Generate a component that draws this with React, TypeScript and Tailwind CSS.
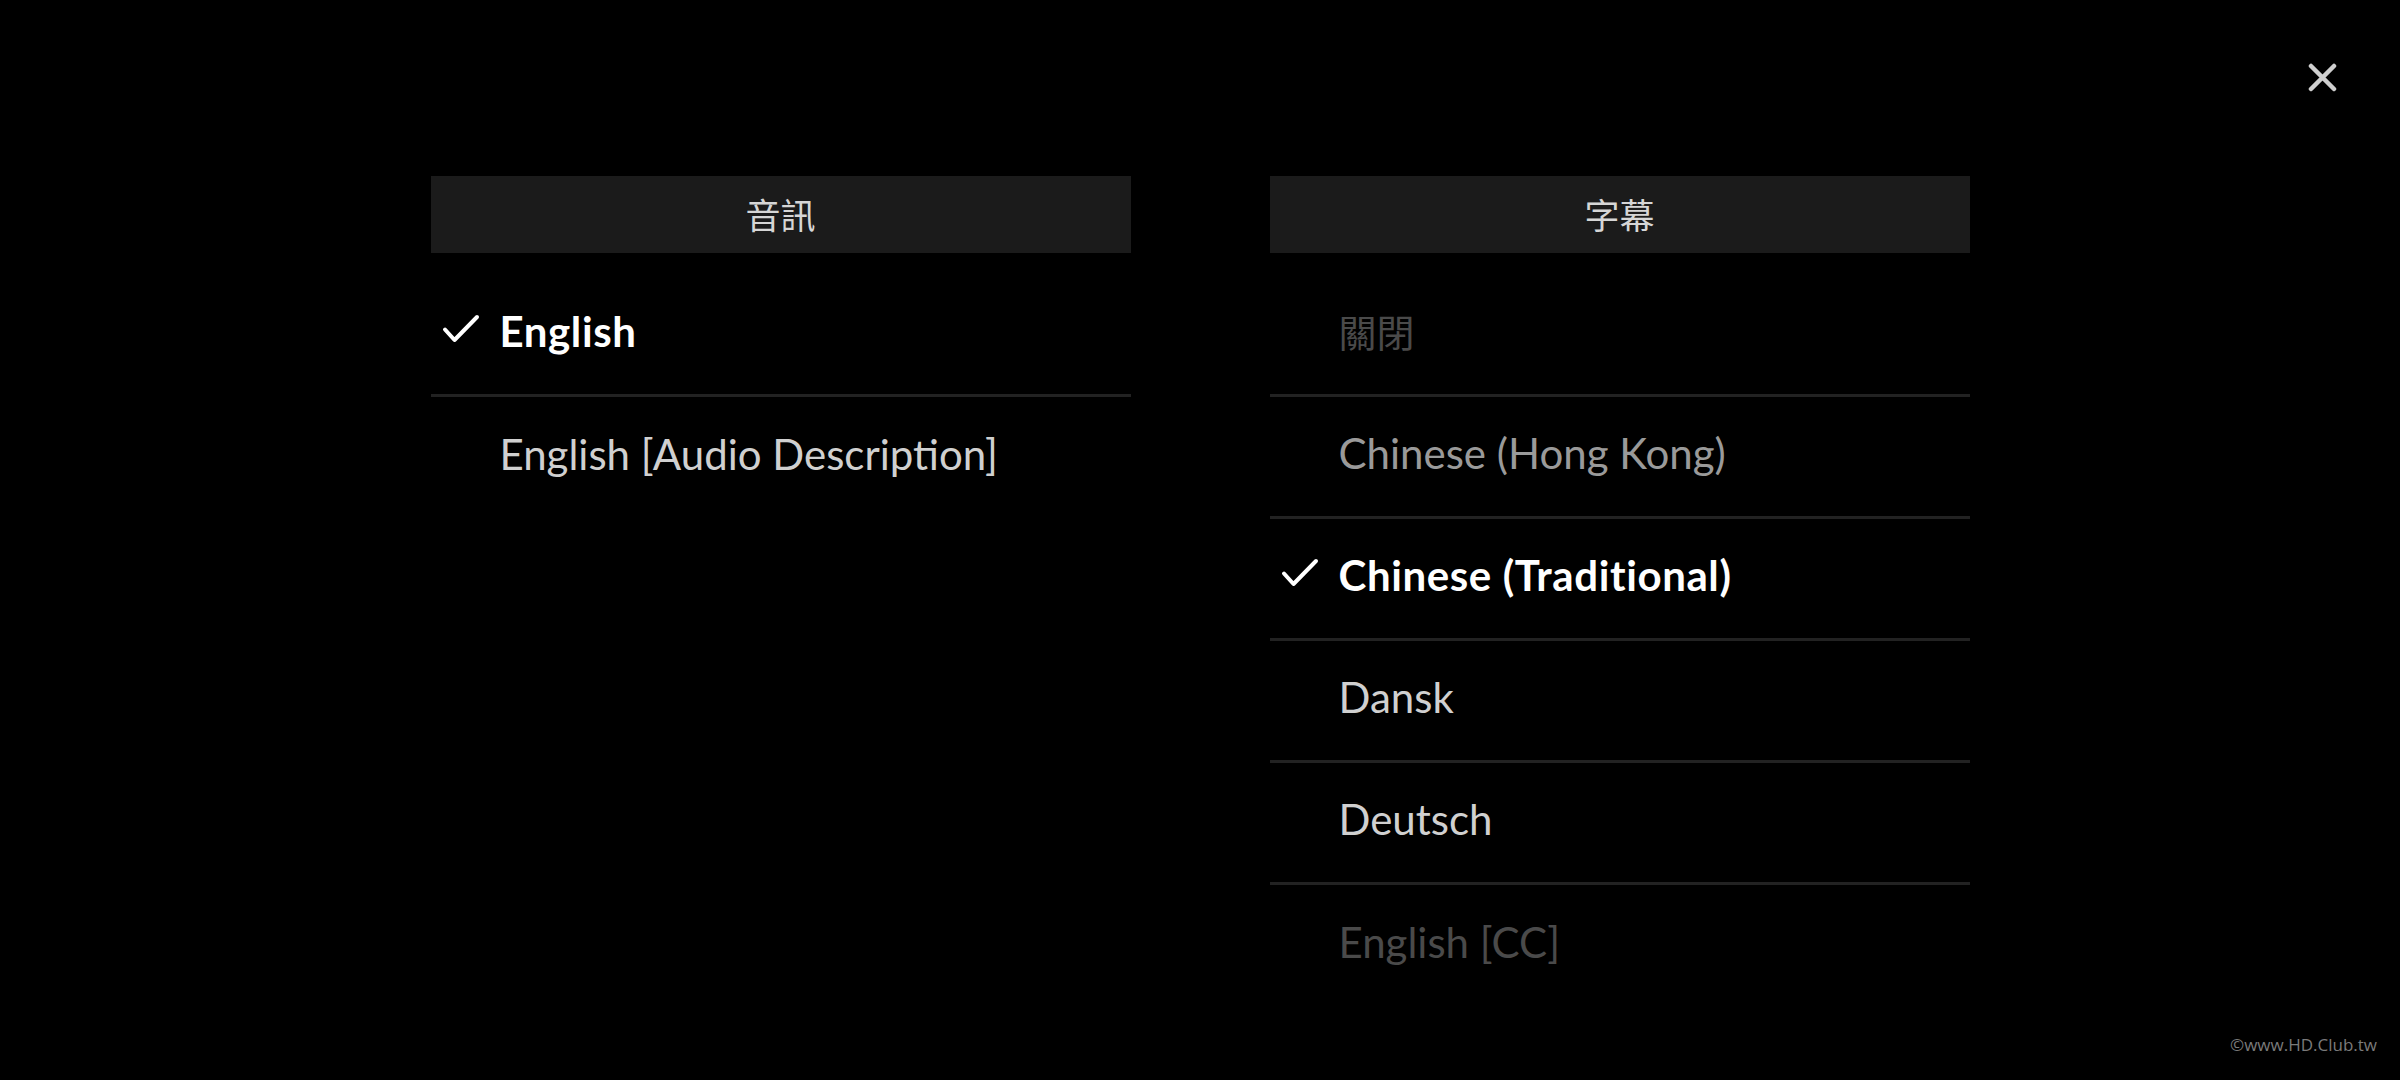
import React from "react";

type Item = { label: string; tone: "selected" | "normal" | "dim" | "faint"; cjk?: boolean };

const AUDIO: Item[] = [
  { label: "English", tone: "selected" },
  { label: "English [Audio Description]", tone: "normal" },
];

const SUBTITLES: Item[] = [
  { label: "關閉", tone: "faint", cjk: true },
  { label: "Chinese (Hong Kong)", tone: "dim" },
  { label: "Chinese (Traditional)", tone: "selected" },
  { label: "Dansk", tone: "normal" },
  { label: "Deutsch", tone: "normal" },
  { label: "English [CC]", tone: "faint" },
];

const toneClass: Record<Item["tone"], string> = {
  selected: "text-white font-bold tracking-[0.6px]",
  normal: "text-[#d0d0d0]",
  dim: "text-[#9a9a9a]",
  faint: "text-[#4a4a4a]",
};

function Check() {
  return (
    <svg width="38" height="30" viewBox="0 0 38 30" fill="none">
      <path d="M3 15.5 L12.5 26 L35 3" stroke="#ffffff" strokeWidth="4" strokeLinecap="round" strokeLinejoin="round" />
    </svg>
  );
}

function Column({ title, items }: { title: string; items: Item[] }) {
  return (
    <div className="w-[700px]">
      <div className="h-[77px] bg-[#1b1b1b] flex items-center justify-center text-[35px] text-[#d6d6d6] font-['Noto_Sans_CJK_TC',sans-serif]">
        {title}
      </div>
      <div className="mt-[22px]">
        {items.map((it, i) => (
          <div
            key={it.label}
            className={`h-[122px] flex items-center gap-[20px] pl-[11px] pb-[8px] ${
              i < items.length - 1 ? "border-b-[3px] border-[#222222]" : ""
            }`}
          >
            <span className="w-[38px] h-[30px] flex items-center justify-center -mt-[4px]">
              {it.tone === "selected" && <Check />}
            </span>
            <span
              className={`leading-none ${toneClass[it.tone]} ${
                it.cjk ? "font-['Noto_Sans_CJK_TC',sans-serif] text-[38px]" : "text-[42px]"
              }`}
            >
              {it.label}
            </span>
          </div>
        ))}
      </div>
    </div>
  );
}

export default function App() {
  return (
    <div className="w-[2400px] h-[1080px] bg-black overflow-hidden flex flex-col font-['Lato','Noto_Sans_CJK_TC',sans-serif]">
      <div className="h-[176px] shrink-0 flex justify-end items-start pt-[63px] pr-[63px]">
        <button className="w-[29px] h-[29px]" aria-label="close">
          <svg viewBox="0 0 29 29" width="29" height="29" fill="none">
            <path d="M3 3 L26 26 M26 3 L3 26" stroke="#cfcfcf" strokeWidth="4.5" strokeLinecap="round" />
          </svg>
        </button>
      </div>

      <div className="flex justify-center gap-[139px]">
        <Column title="音訊" items={AUDIO} />
        <Column title="字幕" items={SUBTITLES} />
      </div>

      <div className="mt-auto flex justify-end pr-[23px] pb-[23px] text-[17px] text-[#7a7a7a] font-['Open_Sans',sans-serif]">
        ©www.HD.Club.tw
      </div>
    </div>
  );
}
